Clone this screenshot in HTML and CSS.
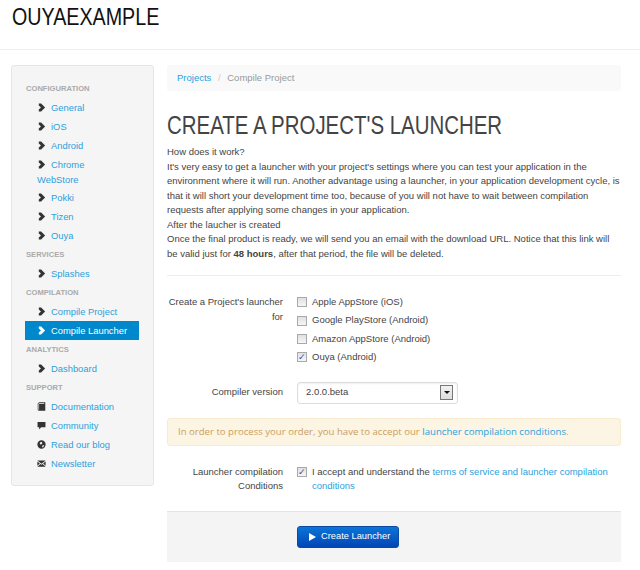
FILE: index.html
```html
<!DOCTYPE html>
<html lang="en">
<head>
  <meta charset="UTF-8" />
  <title>Create a Project's Launcher</title>
  <link rel="stylesheet" href="styles.css">
</head>

<body>

  <svg class="defs">
    <defs>
      <symbol id="i-chevron" viewBox="0 0 10 10"><path d="M2 0.6 L4.6 0.6 L9 5 L4.6 9.4 L2 9.4 L2 7.2 L4.4 5 L2 2.8 Z"/></symbol>
      <symbol id="i-book" viewBox="0 0 10 10"><path fill-rule="evenodd" d="M0.8 1.6 L2.4 0.4 L9.2 0.4 L9.2 9.6 L2 9.6 L0.8 8.8 Z M1.6 1.9 L1.6 8.4 L2.3 8.9 L2.3 2.2 L8 2.2 L8 1.4 L2.4 1.4 Z"/></symbol>
      <symbol id="i-comment" viewBox="0 0 10 10"><path d="M0.6 1 L9.4 1 L9.4 7 L4.6 7 L2.4 9.4 L2.4 7 L0.6 7 Z"/></symbol>
      <symbol id="i-globe" viewBox="0 0 10 10"><path fill-rule="evenodd" d="M5 0.4 A4.6 4.6 0 1 1 5 9.6 A4.6 4.6 0 1 1 5 0.4 Z M3 3 L5 2 L6 3.4 L4.6 5 L3.4 4.6 Z M6 6 L8 5.6 L7 8 L5.6 8 Z"/></symbol>
      <symbol id="i-mail" viewBox="0 0 10 10"><path d="M0.4 1.6 L9.6 1.6 L5 5.4 Z M0.4 2.8 L3.2 5 L0.4 7.6 Z M9.6 2.8 L6.8 5 L9.6 7.6 Z M0.4 8.6 L3.9 5.6 L5 6.5 L6.1 5.6 L9.6 8.6 Z"/></symbol>
    </defs>
  </svg>

  <header class="site-header">
    <div class="brand">OUYAEXAMPLE</div>
  </header>

  <div class="layout">

    <aside class="sidebar">
      <div class="nav-title">CONFIGURATION</div>
      <a class="nav-item" href="#"><svg class="ico"><use href="#i-chevron"/></svg>General</a>
      <a class="nav-item" href="#"><svg class="ico"><use href="#i-chevron"/></svg>iOS</a>
      <a class="nav-item" href="#"><svg class="ico"><use href="#i-chevron"/></svg>Android</a>
      <a class="nav-item wrap" href="#"><svg class="ico"><use href="#i-chevron"/></svg>Chrome WebStore</a>
      <a class="nav-item" href="#"><svg class="ico"><use href="#i-chevron"/></svg>Pokki</a>
      <a class="nav-item" href="#"><svg class="ico"><use href="#i-chevron"/></svg>Tizen</a>
      <a class="nav-item" href="#"><svg class="ico"><use href="#i-chevron"/></svg>Ouya</a>
      <div class="nav-title">SERVICES</div>
      <a class="nav-item" href="#"><svg class="ico"><use href="#i-chevron"/></svg>Splashes</a>
      <div class="nav-title">COMPILATION</div>
      <a class="nav-item" href="#"><svg class="ico"><use href="#i-chevron"/></svg>Compile Project</a>
      <a class="nav-item active" href="#"><svg class="ico"><use href="#i-chevron"/></svg>Compile Launcher</a>
      <div class="nav-title">ANALYTICS</div>
      <a class="nav-item" href="#"><svg class="ico"><use href="#i-chevron"/></svg>Dashboard</a>
      <div class="nav-title">SUPPORT</div>
      <a class="nav-item" href="#"><svg class="ico"><use href="#i-book"/></svg>Documentation</a>
      <a class="nav-item" href="#"><svg class="ico"><use href="#i-comment"/></svg>Community</a>
      <a class="nav-item" href="#"><svg class="ico"><use href="#i-globe"/></svg>Read our blog</a>
      <a class="nav-item" href="#"><svg class="ico"><use href="#i-mail"/></svg>Newsletter</a>
    </aside>

    <main class="content">
      <div class="breadcrumb">
        <a href="#">Projects</a>
        <span class="sep">/</span>
        <span class="current">Compile Project</span>
      </div>

      <h1><span>CREATE A PROJECT'S LAUNCHER</span></h1>

      <p class="intro">
        How does it work?<br>
        It's very easy to get a launcher with your project's settings where you can test your application in the environment where it will run. Another advantage using a launcher, in your application development cycle, is that it will short your development time too, because of you will not have to wait between compilation requests after applying some changes in your application.<br>
        After the laucher is created<br>
        Once the final product is ready, we will send you an email with the download URL. Notice that this link will be valid just for <strong>48 hours</strong>, after that period, the file will be deleted.
      </p>

      <hr class="rule">

      <div class="form-row targets">
        <div class="form-label">Create a Project's launcher for</div>
        <div class="form-controls">
          <label class="check"><span class="box"></span>Apple AppStore (iOS)</label>
          <label class="check"><span class="box"></span>Google PlayStore (Android)</label>
          <label class="check"><span class="box"></span>Amazon AppStore (Android)</label>
          <label class="check"><span class="box checked">&#10003;</span>Ouya (Android)</label>
        </div>
      </div>

      <div class="form-row version">
        <div class="form-label">Compiler version</div>
        <div class="form-controls">
          <div class="select">
            <span>2.0.0.beta</span>
            <span class="select-arrow"></span>
          </div>
        </div>
      </div>

      <div class="alert">In order to process your order, you have to accept our <a href="#">launcher compilation conditions</a>.</div>

      <div class="form-row terms">
        <div class="form-label">Launcher compilation Conditions</div>
        <div class="form-controls accept">
          <span class="box checked">&#10003;</span>
          <span>I accept and understand the <a href="#">terms of service and launcher compilation conditions</a></span>
        </div>
      </div>

      <div class="form-actions">
        <button class="btn"><span class="play"></span>Create Launcher</button>
      </div>
    </main>

  </div>

</body>
</html>
```

FILE: styles.css
```css
body {
  margin: 0;
  font-family: "Liberation Sans", Arial, sans-serif;
  font-size: 9.5px;
  line-height: 14.5px;
  color: #444;
  background: #fff;
}

a {
  color: #2d9fdc;
  text-decoration: none;
}

.defs {
  display: none;
}

.site-header {
  height: 49px;
  border-bottom: 1px solid #eee;
  padding-left: 12px;
}

/* no narrow face installed, so the headings are squeezed */
.brand {
  font-size: 24px;
  line-height: 33px;
  color: #111;
  transform: scaleX(0.82);
  transform-origin: left;
}

.layout {
  display: flex;
  align-items: flex-start;
  gap: 13px;
  padding: 15px 19px 0 11px;
}

/* sidebar */
.sidebar {
  box-sizing: border-box;
  flex: 0 0 143px;
  height: 421px;
  padding: 13px 14px 0 13px;
  background: #f5f5f5;
  border: 1px solid #e6e6e6;
  border-radius: 3px;
}

.nav-title {
  font-size: 7.6px;
  font-weight: bold;
  line-height: 19px;
  padding-left: 1px;
  color: #aaa;
}

.nav-item {
  display: block;
  font-size: 9.4px;
  line-height: 19px;
  padding-left: 12px;
}

.nav-item.wrap {
  line-height: 14.5px;
  padding-top: 3px;
  padding-right: 30px;
  padding-bottom: 0.5px;
}

.nav-item.active {
  background: #0088cc;
  color: #fff;
}

.ico {
  display: inline-block;
  width: 9px;
  height: 9px;
  margin-right: 5px;
  vertical-align: -1px;
  fill: #333;
}

.active .ico {
  fill: #fff;
}

/* main */
.content {
  flex: 1;
  min-width: 0;
}

.breadcrumb {
  height: 26px;
  line-height: 26px;
  padding-left: 10px;
  background: #f9f9f9;
  border-radius: 3px;
}

.breadcrumb .sep {
  margin: 0 4px;
  color: #ccc;
}

.breadcrumb .current {
  color: #999;
}

h1 {
  margin: 19px 0 5px;
  font-size: 26px;
  font-weight: normal;
  line-height: 30px;
  color: #444;
  white-space: nowrap;
  transform: scaleX(0.786);
  transform-origin: left;
}

.intro {
  margin: 0;
  padding-right: 0.5px;
}

.rule {
  height: 1px;
  margin: 14px 0 19px;
  border: 0;
  background: #eee;
}

.form-row {
  display: flex;
}

.form-label {
  flex: 0 0 116px;
  text-align: right;
  margin-right: 14px;
}

.targets .form-controls {
  margin-top: -2px;
}

.check {
  display: flex;
  align-items: center;
  height: 18.4px;
}

.box {
  box-sizing: border-box;
  flex: none;
  width: 10px;
  height: 10px;
  margin-right: 5px;
  border: 1px solid #a9a9a9;
  background: linear-gradient(#e0e0e0, #f6f6f6);
  color: #3a4f8a;
  font-size: 9px;
  line-height: 8px;
  text-align: center;
}

.version {
  margin-top: 15px;
  align-items: center;
}

.select {
  box-sizing: border-box;
  display: flex;
  align-items: center;
  justify-content: space-between;
  width: 161px;
  height: 22px;
  padding: 0 4px 0 8px;
  border: 1px solid #ddd;
  border-radius: 3px;
  box-shadow: inset 0 1px 2px #eee;
}

.select-arrow {
  box-sizing: border-box;
  position: relative;
  width: 13px;
  height: 15px;
  border: 1px solid #777;
  background: linear-gradient(#f2f2f2, #ddd);
}

.select-arrow::after {
  content: "";
  position: absolute;
  left: 3px;
  top: 5px;
  border: 3px solid transparent;
  border-top: 3px solid #111;
  border-bottom: 0;
}

.alert {
  box-sizing: border-box;
  margin-top: 14px;
  height: 28px;
  line-height: 26px;
  padding-left: 10px;
  font-family: "Open Sans", sans-serif;
  font-size: 9.6px;
  background: #fcf5e3;
  border: 1px solid #f8ebcf;
  border-radius: 3px;
  color: #cb9d62;
}

.terms {
  margin-top: 19px;
}

.accept {
  display: flex;
  flex: 1;
  padding-right: 8px;
}

.accept .box {
  margin-top: 2px;
}

.form-actions {
  box-sizing: border-box;
  height: 51px;
  margin-top: 17px;
  padding: 14px 0 0 130px;
  background: #f4f4f4;
  border-top: 1px solid #e5e5e5;
}

.btn {
  display: flex;
  align-items: center;
  height: 22px;
  width: 102px;
  padding: 0 0 0 11px;
  font: inherit;
  font-size: 9.3px;
  color: #fff;
  background: linear-gradient(#0a75d8, #0345b5);
  border: 1px solid #0a4aa0;
  border-radius: 3px;
}

.play {
  margin-right: 5px;
  border-left: 7px solid #fff;
  border-top: 4px solid transparent;
  border-bottom: 4px solid transparent;
}
```
